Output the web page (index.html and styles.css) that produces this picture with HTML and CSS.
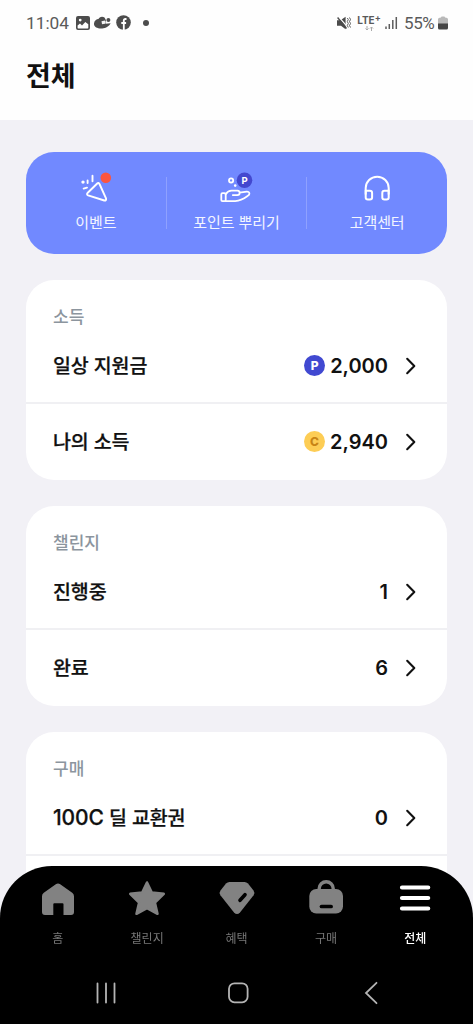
FILE: index.html
```html
<!DOCTYPE html>
<html lang="ko">
<head>
<meta charset="utf-8">
<meta name="viewport" content="width=device-width, initial-scale=1">
<title>전체</title>
<link rel="stylesheet" href="styles.css">
</head>
<body>
<div class="screen">
  <header class="header">
    <div class="status">
      <span class="clock">11:04</span>
      <svg class="st-photo" width="14" height="14" viewBox="0 0 14 14"><path fill="#4c4c4c" fill-rule="evenodd" d="M2 0h10a2 2 0 0 1 2 2v10a2 2 0 0 1-2 2H2a2 2 0 0 1-2-2V2a2 2 0 0 1 2-2zM1.600 9.500v2.300q0 .7.700.7h9.300q.7 0 .7-.7V8.200L9.300 6 6 9.500 4 7.600zM4.200 2.700a1.400 1.400 0 1 0 0 2.800 1.400 1.400 0 0 0 0-2.800z"/></svg>
      <svg class="st-care" width="17" height="13" viewBox="0 0 17 13"><path fill="#4c4c4c" d="M0 7.500C.3 4.500 2.500 3.200 4.500 3 5 .8 8.500-.2 10.500 1.500L12 4.300c-.7 1-.9 2.700-.4 3.500l5-.5c-1.200 2.800-4.600 5-8.500 5.200C3.300 12.800-.3 11 0 7.500z"/><circle cx="14.400" cy="3.900" r="2" fill="#4c4c4c"/><path d="M7.500 5.200l3.500-.7v3.200l-3 .6z" fill="#f4f4f4"/></svg>
      <svg class="st-fb" width="15" height="15" viewBox="0 0 15 15"><circle cx="7.500" cy="7.500" r="7.300" fill="#4c4c4c"/><path d="M10.500 4H9.300Q7.800 4 7.800 5.500V15M5.300 8h4.800" fill="none" stroke="#fff" stroke-width="1.800"/></svg>
      <span class="st-dot"></span>
      <span class="spacer"></span>
      <svg class="st-mute" width="14" height="14" viewBox="0 0 14 14"><path fill="#4c4c4c" d="M0 4.300h3.500L8.600.8v12.400L4 9.800H0z"/><path d="M1.700.8 10.500 11" stroke="#fff" stroke-width="1.200"/><path d="M.6 1.500 9.500 12.500" stroke="#4c4c4c" stroke-width="1.400"/><path d="M10.300 2l1 1.500-1 2 1 2-1 2 1 2M12.500 1.500l1 2-1 2 1 2-1 2 1 2" fill="none" stroke="#4c4c4c" stroke-width=".9"/></svg>
      <span class="lte"><b>LTE<i>+</i></b><svg width="9" height="5" viewBox="0 0 9 5"><path d="M2 0v4M.5 2.500 2 4l1.500-1.500M6.500 5V1M5 2.500 6.500 1 8 2.500" fill="none" stroke="#aaa"/></svg></span>
      <svg class="st-signal" width="13" height="13" viewBox="0 0 13 13"><path d="M1 10.500V13M4.300 8v5M7.800 4v9M11.300 1v12" stroke="#5c5c5c" stroke-width="1.500"/></svg>
      <span class="battery-text">55%</span>
      <svg class="st-battery" width="10" height="14" viewBox="0 0 10 14"><path fill="#b9b9b9" d="M3 1.500Q3 .5 4 .5h2q1 0 1 1 3 .2 3 2V8H0V3.500q0-1.800 3-2z"/><path fill="#454545" d="M0 7.500h10V12q0 1.500-1.500 1.500h-7Q0 13.500 0 12z"/></svg>
    </div>
    <h1 class="title">전체</h1>
  </header>

  <main class="content">
    <section class="quick">
      <a class="quick-item">
        <svg width="34" height="32" viewBox="0 0 34 32"><g fill="none" stroke="#fff" stroke-width="1.900" stroke-linecap="round" stroke-linejoin="round"><path d="M18.200 11.500q1.300-1.300 2.300.5L27 26.300q.6 2.400-1.700 2.200L9.100 23.300q-1.800-.8-.6-2.300z"/><path d="M8.600 8.400v2.600M13.500 3.800v5.400M4.600 16.600l3.400-1"/></g><circle cx="4" cy="10.100" r="1.700" fill="#fff"/><circle cx="26.800" cy="5.700" r="5.300" fill="#fb5540"/></svg>
        <span>이벤트</span>
      </a>
      <a class="quick-item">
        <svg width="34" height="32" viewBox="0 0 34 32"><g fill="none" stroke="#fff" stroke-width="1.800" stroke-linecap="round" stroke-linejoin="round"><circle cx="11.100" cy="8.400" r="2.100"/><rect x="1.300" y="21.200" width="4.400" height="8" rx="1.200"/><path d="M5.700 22.200Q8 18.700 11.500 18.700h6q2.300.2 2.200 2.300 0 2-2.400 2.100h-4.500M19.500 20.700l7.200-1q2.700-.1 2.700 2 0 1.300-2.200 2.600-6 4.500-12 4.800H5.700"/></g><circle cx="15.200" cy="13.600" r="1.300" fill="#fff"/><circle cx="24.500" cy="8.200" r="7.800" fill="#4348cf"/><text x="24.500" y="11.600" text-anchor="middle" class="badge-letter">P</text></svg>
        <span>포인트 뿌리기</span>
      </a>
      <a class="quick-item">
        <svg width="34" height="32" viewBox="0 0 34 32"><g fill="none" stroke="#fff" stroke-width="2"><path d="M5.700 22.500V16a11.500 11.200 0 0 1 23 0v6.500"/><path d="M5.700 18.800h4.200q2.200 0 2.200 2.200v4.600q0 2-2.200 2H7.900q-2.200 0-2.200-2zM28.700 18.800h-4.200q-2.200 0-2.200 2.200v4.600q0 2 2.200 2h2q2.200 0 2.200-2z"/></g></svg>
        <span>고객센터</span>
      </a>
    </section>

    <section class="card">
      <h2>소득</h2>
      <div class="row first"><span class="label">일상 지원금</span><span class="coin point">P</span><span class="value">2,000</span><svg class="chev" width="12" height="18" viewBox="0 0 12 18"><path d="M2.200 1.800 9.300 9l-7.100 7.200"/></svg></div>
      <div class="row"><span class="label">나의 소득</span><span class="coin cash">C</span><span class="value">2,940</span><svg class="chev" width="12" height="18" viewBox="0 0 12 18"><path d="M2.200 1.800 9.300 9l-7.100 7.200"/></svg></div>
    </section>

    <section class="card">
      <h2>챌린지</h2>
      <div class="row first"><span class="label">진행중</span><span class="value">1</span><svg class="chev" width="12" height="18" viewBox="0 0 12 18"><path d="M2.200 1.800 9.300 9l-7.100 7.200"/></svg></div>
      <div class="row"><span class="label">완료</span><span class="value">6</span><svg class="chev" width="12" height="18" viewBox="0 0 12 18"><path d="M2.200 1.800 9.300 9l-7.100 7.200"/></svg></div>
    </section>

    <section class="card">
      <h2>구매</h2>
      <div class="row first"><span class="label"><span class="latin">100C</span> 딜 교환권</span><span class="value">0</span><svg class="chev" width="12" height="18" viewBox="0 0 12 18"><path d="M2.200 1.800 9.300 9l-7.100 7.200"/></svg></div>
      <div class="row"></div>
    </section>
  </main>

  <footer class="dock">
    <nav class="tabs">
      <a class="tab"><svg width="40" height="40" viewBox="0 0 40 40"><path fill="#828282" d="M17.800 4.300q2.200-1.600 4.400 0l12 8.500q1.800 1.400 1.800 3.500V32q0 3-3 3H25.500V24.300q0-1-1-1h-8.200q-1 0-1 1V35H7q-3 0-3-3V16.300q0-2.100 1.800-3.500z"/></svg><span>홈</span></a>
      <a class="tab"><svg width="40" height="40" viewBox="0 0 40 40"><path fill="#828282" stroke="#828282" stroke-width="2.500" stroke-linejoin="round" d="M20 2.500l4.800 10 12 1.300-8.900 8.800 2.600 11.200L20 28.200 9.500 33.800l2.600-11.200-8.900-8.800 12-1.300z"/></svg><span>챌린지</span></a>
      <a class="tab"><svg width="40" height="40" viewBox="0 0 40 40"><path fill="#828282" d="M12.500 2h15q2 0 3.500 1.600l5.500 7q1.800 2.400.1 4.600L23 32.500q-3 3.200-6 0L3.400 15.200q-1.700-2.200.1-4.600L9 3.600Q10.500 2 12.500 2z"/><path d="M23 20.300l5-5.600" stroke="#000" stroke-width="3.600" stroke-linecap="round"/></svg><span>혜택</span></a>
      <a class="tab"><svg width="40" height="40" viewBox="0 0 40 40"><path d="M13.200 11V8.500a7 6.800 0 0 1 14 0V11" fill="none" stroke="#828282" stroke-width="3.400"/><rect x="3.300" y="9" width="33.700" height="24.500" rx="7" fill="#828282"/><path d="M15.500 26.500h9.600" stroke="#000" stroke-width="3.700" stroke-linecap="round"/></svg><span>구매</span></a>
      <a class="tab active"><svg width="40" height="40" viewBox="0 0 40 40"><path d="M7 7.500h26.200M7 18h26.200M7 28.500h26.200" stroke="#fff" stroke-width="4.200" stroke-linecap="round"/></svg><span>전체</span></a>
    </nav>
    <div class="system">
      <svg width="24" height="24" viewBox="0 0 24 24"><path d="M3.500 2.500v19M12 2.500v19M20.500 2.500v19"/></svg>
      <svg width="24" height="24" viewBox="0 0 24 24"><rect x="2" y="2.300" width="18.600" height="19" rx="5.500"/></svg>
      <svg width="24" height="24" viewBox="0 0 24 24"><path d="M17.500 1.800 7 12l10.500 10.200"/></svg>
    </div>
  </footer>
</div>
</body>
</html>
```

FILE: styles.css
```css
* { box-sizing: border-box; }
body {
  margin: 0;
  background: #f2f1f6;
  font-family: Inter, "Noto Sans CJK KR", sans-serif;
  color: #111;
}
.screen { height: 1024px; overflow: hidden; }
svg { display: block; flex: none; }
.header { height: 120px; background: #fefefe; }
.status {
  display: flex;
  align-items: center;
  height: 45px;
  padding: 0 25px 0 26px;
  font-family: Roboto, sans-serif;
  font-size: 17.300px;
  color: #5a5a5a;
}
.clock { width: 43px; white-space: nowrap; }
.st-photo { margin-left: 7px; }
.st-care { margin-left: 4px; }
.st-fb { margin-left: 5px; }
.st-dot { width: 6px; height: 6px; margin-left: 12px; border-radius: 50%; background: #4c4c4c; }
.spacer { flex: 1; }
.st-mute { margin-right: 6px; }
.lte {
  display: flex;
  flex-direction: column;
  align-items: center;
  width: 24px;
  margin-right: 4px;
  font-family: Inter, sans-serif;
  font-size: 10px;
  line-height: 11px;
  color: #5a5a5a;
}
.lte b { font-weight: 700; white-space: nowrap; }
.lte i { font-style: normal; font-size: 9px; vertical-align: 3px; line-height: 1px; }
.st-signal { margin-right: 6px; }
.battery-text { font-size: 17px; letter-spacing: -0.4px; width: 33px; white-space: nowrap; }
.st-battery { margin-left: 1px; }
.title {
  margin: 14px 0 0 26px;
  font-size: 27px;
  line-height: 36px;
  font-weight: 700;
  letter-spacing: -0.1px;
}
.content { padding: 32px 26px 0; }
.quick {
  display: flex;
  height: 102px;
  margin-bottom: 26px;
  background: #7189ff;
  border-radius: 28px;
}
.quick-item {
  display: flex;
  flex: 1;
  flex-direction: column;
  align-items: center;
  height: 52px;
  margin-top: 25px;
  color: #f3f5ff;
  font-size: 15px;
  line-height: 20px;
  letter-spacing: -0.1px;
  white-space: nowrap;
}
.quick-item svg { margin-top: -5px; }
.quick-item span { margin-top: 9px; }
.quick-item + .quick-item { border-left: 1px solid #8fa1ff; }
.badge-letter { font: 700 9.500px Inter, sans-serif; fill: #fff; }
.card {
  height: 200px;
  margin-bottom: 26px;
  padding-top: 25px;
  background: #fff;
  border-radius: 28px;
}
.card h2 {
  margin: 0;
  padding-left: 27px;
  font-size: 17px;
  line-height: 24px;
  font-weight: 500;
  color: #8c959e;
}
.row {
  display: flex;
  align-items: center;
  height: 77px;
  padding: 0 30px 0 27px;
  border-top: 2px solid #f0f0f3;
  font-size: 20px;
  font-weight: 600;
}
.row.first { height: 73px; border-top: 0; }
.label {
  flex: 1;
  padding-bottom: 2px;
  font-size: 19.500px;
  font-weight: 500;
  letter-spacing: -0.1px;
  -webkit-text-stroke: 0.25px #111;
}
.latin { font-size: 21px; }
.value { padding-top: 1px; }
.chev { margin-left: 17px; fill: none; stroke: #111; stroke-width: 2.100; stroke-linecap: round; stroke-linejoin: round; }
.coin {
  width: 21px;
  height: 21px;
  margin-right: 5px;
  border-radius: 50%;
  font-size: 12px;
  line-height: 21px;
  font-weight: 800;
  text-align: center;
}
.point { background: #4149d1; color: #fff; }
.cash { background: #fdcd55; color: #c88415; }
.dock {
  position: fixed;
  left: 0;
  right: 0;
  bottom: 0;
  width: 473px;
  height: 158px;
  background: #000;
  border-radius: 52px 52px 0 0;
}
.tabs { display: flex; padding: 14px 13px 0; }
.tab {
  display: flex;
  flex: 1;
  flex-direction: column;
  align-items: center;
  gap: 9px;
  color: #777;
  font-size: 12px;
  line-height: 20px;
}
.tab.active { color: #fff; font-weight: 500; }
.system { display: flex; justify-content: space-between; padding: 32px 90px 0 94px; }
.system svg { fill: none; stroke: #b4b4b4; stroke-width: 1.800; stroke-linecap: round; }
```
